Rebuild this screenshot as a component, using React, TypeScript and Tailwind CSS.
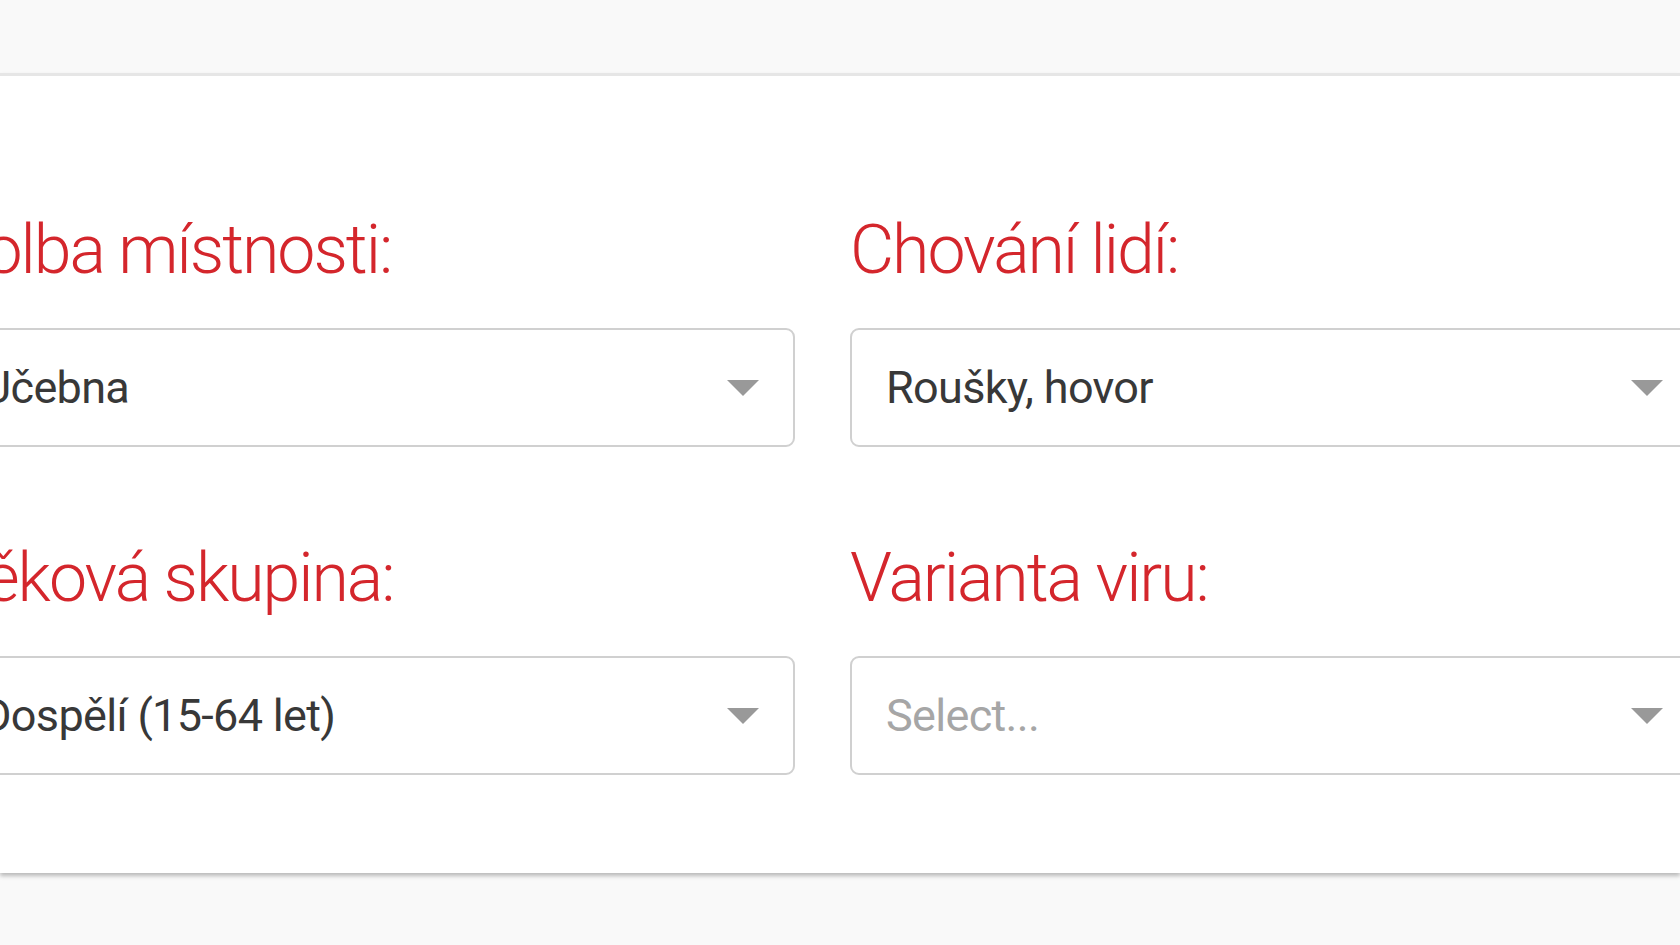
import React from "react";

type Field = {
  label: string;
  value?: string;
  placeholder?: string;
};

const fields: Field[] = [
  { label: "Volba místnosti:", value: "Učebna" },
  { label: "Chování lidí:", value: "Roušky, hovor" },
  { label: "Věková skupina:", value: "Dospělí (15-64 let)" },
  { label: "Varianta viru:", placeholder: "Select..." },
];

function Caret() {
  return (
    <svg width="32" height="16" viewBox="0 0 32 16" className="shrink-0">
      <polygon points="0,0 32,0 16,16" fill="#999999" />
    </svg>
  );
}

function SelectField({ field }: { field: Field }) {
  return (
    <div className="flex flex-col">
      <label className="text-[68px] leading-[80px] font-light text-[#d4262c] tracking-[-0.03em] mb-[38px] whitespace-nowrap">
        {field.label}
      </label>
      <div className="h-[119px] border-2 border-[#d0d0d0] rounded-[9px] bg-white flex items-center pl-[34px] pr-[34px]">
        <span
          className={`flex-1 text-[45px] tracking-[-0.015em] whitespace-nowrap ${
            field.value ? "text-[#383838]" : "text-[#a6a6a6]"
          }`}
        >
          {field.value ?? field.placeholder}
        </span>
        <Caret />
      </div>
    </div>
  );
}

export default function App() {
  return (
    <div
      className="min-h-screen bg-[#f9f9f9] overflow-hidden"
      style={{ fontFamily: "Roboto, 'Noto Sans', sans-serif" }}
    >
      <div className="h-[73px]" />
      <div className="bg-white border-t-[3px] border-[#e6e6e6] shadow-[0_3px_4px_rgba(0,0,0,0.25)] pt-[134px] pb-[98px]">
        <div className="ml-[-54px] w-[1753px] grid grid-cols-[849px_849px] gap-x-[55px] gap-y-[91px]">
          {fields.map((f) => (
            <SelectField key={f.label} field={f} />
          ))}
        </div>
      </div>
    </div>
  );
}
